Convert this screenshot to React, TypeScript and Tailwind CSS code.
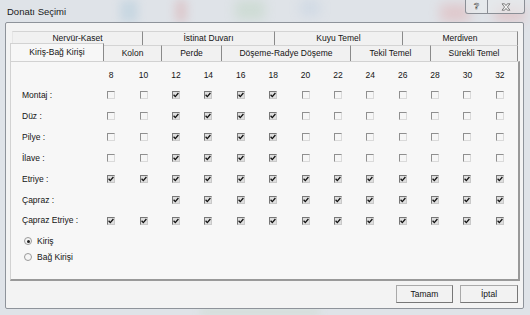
import React from 'react';

const SIZES = [8, 10, 12, 14, 16, 18, 20, 22, 24, 26, 28, 30, 32];

// 1 = checked, 0 = unchecked, null = no box
const ROWS: { label: string; states: (0 | 1 | null)[] }[] = [
  { label: 'Montaj :', states: [0, 0, 1, 1, 1, 1, 0, 0, 0, 0, 0, 0, 0] },
  { label: 'Düz :', states: [0, 0, 1, 1, 1, 1, 0, 0, 0, 0, 0, 0, 0] },
  { label: 'Pilye :', states: [0, 0, 1, 1, 1, 1, 0, 0, 0, 0, 0, 0, 0] },
  { label: 'İlave :', states: [0, 0, 1, 1, 1, 1, 0, 0, 0, 0, 0, 0, 0] },
  { label: 'Etriye :', states: [1, 1, 1, 1, 1, 1, 1, 1, 1, 1, 1, 1, 1] },
  { label: 'Çapraz :', states: [null, null, 1, 1, 1, 1, 1, 1, 1, 1, 1, 1, 1] },
  { label: 'Çapraz Etriye :', states: [1, 1, 1, 1, 1, 1, 1, 1, 1, 1, 1, 1, 1] },
];

const BACK_TABS = [
  { label: 'Nervür-Kaset', w: 'w-[131px]' },
  { label: 'İstinat Duvarı', w: 'w-[132px]' },
  { label: 'Kuyu Temel', w: 'w-[128px]' },
  { label: 'Merdiven', w: 'w-[115px]' },
];

const FRONT_TABS = [
  { label: 'Kolon', w: 'w-[58px]' },
  { label: 'Perde', w: 'w-[60px]' },
  { label: 'Döşeme-Radye Döşeme', w: 'w-[129px]' },
  { label: 'Tekil Temel', w: 'w-[80px]' },
  { label: 'Sürekli Temel', w: 'w-[87px]' },
];

const CheckBox: React.FC<{ checked: boolean }> = ({ checked }) => (
  <div
    className={
      checked
        ? 'w-[8px] h-[8px] border border-t-[#777] border-l-[#777] border-b-[#c9c9c9] border-r-[#c9c9c9] bg-[#dedede] flex items-center justify-center'
        : 'w-[8px] h-[8px] border border-t-[#8f8f8f] border-l-[#8f8f8f] border-b-[#dadada] border-r-[#dadada] bg-[#f6f6f6]'
    }
  >
    {checked && (
      <svg width="6" height="6" viewBox="0 0 6 6">
        <path d="M0.6 2.8 L2.3 4.6 L5.4 1" fill="none" stroke="#111" strokeWidth="1.3" />
      </svg>
    )}
  </div>
);

const Radio: React.FC<{ checked: boolean; label: string }> = ({ checked, label }) => (
  <div className="h-[16px] flex items-center pl-[2px] gap-[5px]">
    <div className="w-[8px] h-[8px] rounded-full border border-[#9a9a9a] bg-[#f6f6f6] flex items-center justify-center">
      {checked && <div className="w-[3px] h-[3px] rounded-full bg-[#222]" />}
    </div>
    <span>{label}</span>
  </div>
);

const App: React.FC = () => {
  return (
    <div className="w-[530px] h-[315px] relative overflow-hidden bg-[#dfe3e8] text-[8.5px] text-[#141414] font-['Liberation_Sans',Arial,sans-serif]">
      {/* blurred glass behind the frame */}
      <div className="absolute left-[120px] top-0 w-[18px] h-[22px] bg-[#6fa9c9] opacity-20 blur-[5px]" />
      <div className="absolute left-[175px] top-0 w-[12px] h-[22px] bg-[#d06060] opacity-20 blur-[5px]" />
      <div className="absolute left-[235px] top-0 w-[30px] h-[20px] bg-[#8cc08a] opacity-20 blur-[6px]" />
      <div className="absolute left-[300px] top-0 w-[20px] h-[16px] bg-[#9ab7d8] opacity-20 blur-[6px]" />
      <div className="absolute left-[440px] top-[4px] w-[30px] h-[18px] bg-[#e07a7a] opacity-25 blur-[6px]" />
      <div className="absolute left-[495px] top-[6px] w-[30px] h-[16px] bg-[#e07a7a] opacity-25 blur-[6px]" />
      <div className="absolute left-[200px] top-[309px] w-[120px] h-[6px] bg-[#a8c89a] opacity-25 blur-[4px]" />

      <div className="relative flex flex-col h-full">
        {/* title bar */}
        <div className="h-[22px] flex items-start justify-between">
          <span className="self-center pl-[7px] pt-[2px] text-[9.5px] text-[#1a1a1a]">Donatı Seçimi</span>
          <div className="flex mr-[5px]">
            <div className="w-[23px] h-[14px] border border-t-0 border-[#8b8f96] rounded-bl-[3px] bg-[#e9ecef]/60 flex items-center justify-center">
              <span className="text-[9px] font-bold text-[#fafafa] [-webkit-text-stroke:0.5px_#555] leading-none">?</span>
            </div>
            <div className="w-[37px] h-[14px] border border-t-0 border-l-0 border-[#8b8f96] rounded-br-[3px] bg-[#e9ecef]/60 flex items-center justify-center">
              <svg width="10" height="8" viewBox="0 0 10 8">
                <path d="M1 0.8 L3.6 0.8 L5 2.6 L6.4 0.8 L9 0.8 L6.4 4 L9 7.2 L6.4 7.2 L5 5.4 L3.6 7.2 L1 7.2 L3.6 4 Z" fill="#f4f4f4" stroke="#666" strokeWidth="0.8" />
              </svg>
            </div>
          </div>
        </div>

        {/* client area */}
        <div className="ml-[5px] mr-[6px] mb-[6px] flex-1 border border-[#8e939a] rounded-[2px] bg-[#f3f3f3] flex flex-col">
          <div className="pl-[4px] pr-[3px] pt-[8px]">
            {/* back row of tabs */}
            <div className="flex ml-[2px] h-[14px]">
              {BACK_TABS.map((t, i) => (
                <div
                  key={t.label}
                  className={`${t.w} h-full flex items-center justify-center border-t border-t-[#d4d4d4] border-r border-r-[#8a8a8a] ${i === 0 ? 'border-l border-l-[#e6e6e6]' : ''} bg-[#f1f1f1]`}
                >
                  {t.label}
                </div>
              ))}
            </div>
            {/* front row of tabs */}
            <div className="flex h-[16px] relative z-10">
              <div className="w-[94px] h-[18px] -mt-[2px] flex items-center justify-center border-t border-l border-[#d2d2d2] border-r border-r-[#8a8a8a] bg-[#f7f7f7]">
                Kiriş-Bağ Kirişi
              </div>
              {FRONT_TABS.map(t => (
                <div
                  key={t.label}
                  className={`${t.w} h-full flex items-center justify-center border-t border-t-[#d4d4d4] border-r border-r-[#8a8a8a] bg-[#f1f1f1]`}
                >
                  {t.label}
                </div>
              ))}
            </div>

            {/* tab page */}
            <div className="h-[220px] border-t border-l border-[#d2d2d2] border-r-2 border-b-2 border-r-[#999] border-b-[#999] bg-[#f7f7f7] pl-[11px] pt-[3px]">
              <div className="grid grid-cols-[73px_repeat(13,32.4px)]">
                <div className="h-[20px]" />
                {SIZES.map(s => (
                  <div key={s} className="h-[20px] flex items-center justify-center">
                    {s}
                  </div>
                ))}
                {ROWS.map(r => (
                  <React.Fragment key={r.label}>
                    <div className="h-[20.9px] flex items-center">{r.label}</div>
                    {r.states.map((st, j) => (
                      <div key={j} className="h-[20.9px] flex items-center justify-center">
                        {st !== null && <CheckBox checked={st === 1} />}
                      </div>
                    ))}
                  </React.Fragment>
                ))}
              </div>
              <div className="mt-[2px]">
                <Radio checked label="Kiriş" />
                <Radio checked={false} label="Bağ Kirişi" />
              </div>
            </div>
          </div>

          {/* buttons */}
          <div className="flex justify-end gap-[7px] pr-[5px] mt-[4px]">
            <button className="w-[57px] h-[18px] border border-[#a9a9a9] border-r-[#777] border-b-[#777] bg-[#f2f2f2] text-[8.5px]">
              Tamam
            </button>
            <button className="w-[58px] h-[18px] border border-[#a9a9a9] border-r-[#777] border-b-[#777] bg-[#f2f2f2] text-[8.5px]">
              İptal
            </button>
          </div>
        </div>
      </div>
    </div>
  );
};

export default App;
